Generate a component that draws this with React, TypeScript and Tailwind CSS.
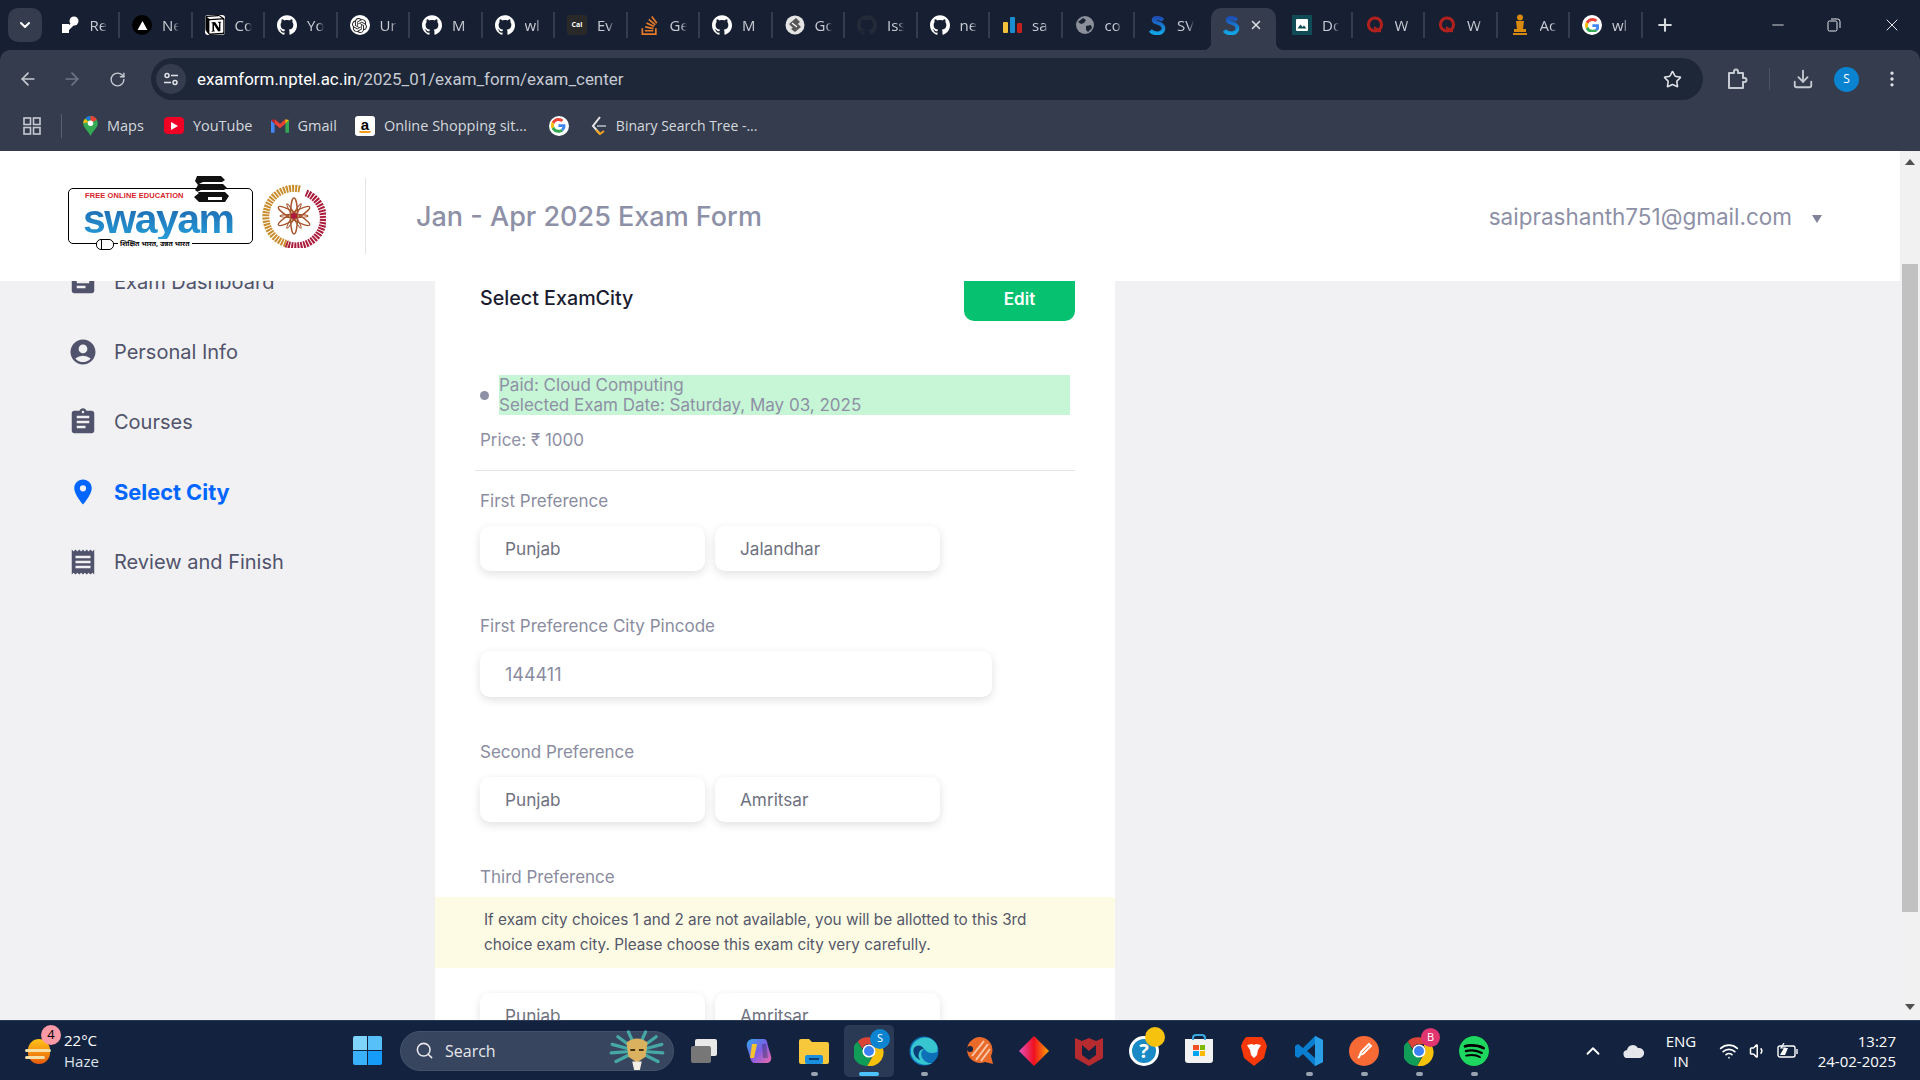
import type { ReactNode } from "react";
import { ArrowLeft, ArrowRight, RotateCw, Star, Download, Plus, X, Minus, ChevronDown, ChevronUp, Search, Wifi, Volume1, EllipsisVertical } from "lucide-react";
import { MdAccountCircle, MdAssignment, MdPlace, MdReceipt } from "react-icons/md";
import { SiGithub, SiNotion, SiOpenai, SiStackoverflow, SiSpotify } from "react-icons/si";

function GoogleIcon({ size = 22 }: { size?: number }) {
  return (
    <span className="flex items-center justify-center rounded-full bg-white" style={{ width: size, height: size }}>
      <svg viewBox="0 0 48 48" width={size * 0.74} height={size * 0.74}>
        <path fill="#EA4335" d="M24 9.5c3.54 0 6.71 1.22 9.21 3.6l6.85-6.85C35.9 2.38 30.47 0 24 0 14.62 0 6.51 5.38 2.56 13.22l7.98 6.19C12.43 13.72 17.74 9.5 24 9.5z" />
        <path fill="#4285F4" d="M46.98 24.55c0-1.57-.15-3.09-.38-4.55H24v9.02h12.94c-.58 2.96-2.26 5.48-4.78 7.18l7.73 6c4.51-4.18 7.09-10.36 7.09-17.65z" />
        <path fill="#FBBC05" d="M10.53 28.59c-.48-1.45-.76-2.99-.76-4.59s.27-3.14.76-4.59l-7.98-6.19C.92 16.46 0 20.12 0 24c0 3.88.92 7.54 2.56 10.78l7.97-6.19z" />
        <path fill="#34A853" d="M24 48c6.48 0 11.93-2.13 15.89-5.81l-7.73-6c-2.15 1.45-4.92 2.3-8.16 2.3-6.26 0-11.57-4.22-13.47-9.91l-7.98 6.19C6.51 42.62 14.62 48 24 48z" />
      </svg>
    </span>
  );
}

function GithubIcon({ dark }: { dark?: boolean }) {
  return (
    <span className={dark ? "text-[#232b38]" : "text-white"}>
      <SiGithub size={20} />
    </span>
  );
}

function SwayamS({ size = 20 }: { size?: number }) {
  return (
    <svg viewBox="0 0 20 24" width={size} height={size}>
      <defs>
        <linearGradient id="sg" x1="0" y1="0" x2="0" y2="1">
          <stop offset="0" stopColor="#1e4fb5" />
          <stop offset="1" stopColor="#11a5e6" />
        </linearGradient>
      </defs>
      <path d="M17 6.5C15.5 4.6 13 3.6 10.4 3.6 7.6 3.6 6 4.8 6 6.3c0 3.8 11.8 2.2 11.8 9.6 0 3.6-3.2 6.1-7.8 6.1-3.4 0-6.3-1.3-8-3.4" fill="none" stroke="url(#sg)" strokeWidth="4.6" />
    </svg>
  );
}

function QuoraIcon() {
  return (
    <svg viewBox="0 0 20 20" width="20" height="20">
      <circle cx="10" cy="9.5" r="6.6" fill="none" stroke="#b3211f" strokeWidth="3" />
      <path d="M9 12.5c2 0 3 3.6 7 3.6" fill="none" stroke="#b3211f" strokeWidth="2.6" />
    </svg>
  );
}

function ChromeIcon({ size = 30 }: { size?: number }) {
  return (
    <svg viewBox="0 0 48 48" width={size} height={size}>
      <path fill="#db4437" d="M24 2a22 22 0 0 1 19 11H24a11 11 0 0 0-10.4 7.4L6 8.6A22 22 0 0 1 24 2z" />
      <path fill="#0f9d58" d="M6 8.6l9.5 16.5A11 11 0 0 0 28 34.3l-6.8 13.5A22 22 0 0 1 6 8.6z" />
      <path fill="#f4c20d" d="M43 13a22 22 0 0 1-21.8 34.8L30.6 31A11 11 0 0 0 32 16.5V13z" />
      <circle cx="24" cy="24" r="10.5" fill="#fff" />
      <circle cx="24" cy="24" r="8" fill="#3b82f6" />
    </svg>
  );
}

const tabs: { icon: ReactNode; label: string; active?: boolean }[] = [
  {
    label: "Re",
    icon: (
      <svg viewBox="0 0 20 20" width="20" height="20" fill="#fff">
        <circle cx="14" cy="6" r="4.5" />
        <path d="M2 9h7v9H2zM9 10l4-3 2 2-6 6z" />
      </svg>
    ),
  },
  {
    label: "Ne",
    icon: (
      <span className="flex h-[20px] w-[20px] items-center justify-center rounded-full bg-black">
        <svg viewBox="0 0 10 10" width="11" height="11"><path d="M5 1l4.5 8h-9z" fill="#fff" /></svg>
      </span>
    ),
  },
  { label: "Co", icon: <span className="flex rounded-[3px] bg-white text-black"><SiNotion size={20} /></span> },
  { label: "Yo", icon: <GithubIcon /> },
  { label: "Ur", icon: <span className="flex h-[20px] w-[20px] items-center justify-center rounded-full bg-white text-[#222]"><SiOpenai size={15} /></span> },
  { label: "M", icon: <GithubIcon /> },
  { label: "wl", icon: <GithubIcon /> },
  {
    label: "Ev",
    icon: <span className="flex h-[20px] w-[20px] items-center justify-center rounded-[3px] bg-[#292929] text-[7px] font-bold text-white">Cal</span>,
  },
  { label: "Ge", icon: <span className="text-[#e87a26]"><SiStackoverflow size={19} /></span> },
  { label: "M", icon: <GithubIcon /> },
  {
    label: "Go",
    icon: (
      <svg viewBox="0 0 20 20" width="20" height="20">
        <circle cx="10" cy="10" r="9.5" fill="#e4e4e4" />
        <path d="M4 9l7-6 4 4-7 6zM6 14l7-5 3 3-6 5z" fill="#555" />
        <path d="M7 8l5 4" stroke="#fff" strokeWidth="1.2" />
      </svg>
    ),
  },
  { label: "Iss", icon: <GithubIcon dark /> },
  { label: "ne", icon: <GithubIcon /> },
  {
    label: "sa",
    icon: (
      <svg viewBox="0 0 20 20" width="20" height="20">
        <rect x="1" y="7" width="5" height="11" rx="1" fill="#f3c23c" />
        <rect x="8" y="2" width="5" height="16" rx="1" fill="#1b8ed1" />
        <rect x="15" y="8" width="5" height="10" rx="1" fill="#c4201c" />
      </svg>
    ),
  },
  {
    label: "co",
    icon: (
      <svg viewBox="0 0 20 20" width="20" height="20">
        <circle cx="10" cy="10" r="9" fill="#8b909b" />
        <path d="M3 7l5-4 3 2-2 3-3 1zM11 11l5-1 1 3-4 4-2-2z" fill="#1a2333" />
      </svg>
    ),
  },
  { label: "SV", icon: <SwayamS /> },
  { label: "", icon: <SwayamS />, active: true },
  {
    label: "Do",
    icon: (
      <span className="flex h-[20px] w-[20px] items-center justify-center bg-[#0f4c55]">
        <svg viewBox="0 0 14 14" width="14" height="14"><rect x="1" y="1" width="12" height="12" rx="1" fill="#fff" /><path d="M2.5 10.5l3-4 2 2.5 1.5-1.5 2.5 3z" fill="#0f4c55" /></svg>
      </span>
    ),
  },
  { label: "W", icon: <QuoraIcon /> },
  { label: "W", icon: <QuoraIcon /> },
  {
    label: "Ac",
    icon: (
      <svg viewBox="0 0 20 22" width="20" height="22" fill="#d98a0b">
        <circle cx="10" cy="3.5" r="3" />
        <path d="M6 7h8l-1 8h-6z" />
        <rect x="4" y="15" width="12" height="3" />
        <rect x="3" y="19" width="14" height="2" />
      </svg>
    ),
  },
  { label: "wl", icon: <GoogleIcon size={20} /> },
];

function ChromeTabs() {
  return (
    <div className="flex h-[50px] items-center bg-[#172032] pl-[8px]">
      <div className="mr-[5.5px] flex h-[34px] w-[34px] items-center justify-center rounded-[10px] bg-[#343c4d] text-white">
        <ChevronDown size={16} strokeWidth={3} />
      </div>
      {tabs.map((tab, i) =>
        tab.active ? (
          <div key={i} className="flex h-[50px] w-[72.5px] items-end pl-[3.5px]">
            <div className="relative flex h-[42px] w-[65px] items-center rounded-t-[10px] bg-[#343c4d] pb-[8px] pl-[10px]">
              <span className="absolute bottom-0 left-[-8px] h-[8px] w-[8px] bg-[radial-gradient(circle_at_0_0,transparent_8px,#343c4d_8.5px)]" />
              <span className="absolute bottom-0 right-[-8px] h-[8px] w-[8px] bg-[radial-gradient(circle_at_100%_0,transparent_8px,#343c4d_8.5px)]" />
              {tab.icon}
              <X size={14} strokeWidth={2.5} className="ml-[8px] text-[#dfe2e8]" />
            </div>
          </div>
        ) : (
          <div key={i} className="flex h-[50px] w-[72.5px] items-center pl-[12px]">
            <span className="flex w-[20px] shrink-0 items-center justify-center">{tab.icon}</span>
            <span className="ml-[10px] w-[17px] overflow-hidden whitespace-nowrap text-[15px] text-[#c9ccd4] [mask-image:linear-gradient(to_right,black_65%,transparent)]">
              {tab.label}
            </span>
            {i !== 15 && <span className="ml-auto h-[26px] w-[2px] bg-[#343c4d]" />}
          </div>
        ),
      )}
      <Plus size={20} strokeWidth={2.5} className="ml-[12px] text-[#d6d9df]" />
      <div className="ml-auto flex items-center text-[#e6e8ec]">
        <Minus size={18} strokeWidth={1.2} className="mr-[40px]" />
        <svg viewBox="0 0 14 14" width="14" height="14" fill="none" stroke="currentColor" strokeWidth="1" className="mr-[41px]">
          <rect x="1" y="3" width="9" height="10" rx="1.5" />
          <path d="M4 1h6.5A2.5 2.5 0 0 1 13 3.5V10" />
        </svg>
        <X size={20} strokeWidth={1.2} className="mr-[18px]" />
      </div>
    </div>
  );
}

function ChromeToolbar() {
  return (
    <div className="flex h-[50px] items-end rounded-t-[10px] bg-[#343c4d] pl-[18px]">
      <div className="flex h-[42px] items-center text-[#c6cad2]">
        <ArrowLeft size={20} />
        <ArrowRight size={20} className="ml-[24px] text-[#6f7583]" />
        <RotateCw size={17} className="ml-[27px]" />
      </div>
      <div className="ml-[25px] flex h-[42px] w-[1552px] items-center rounded-full bg-[#1e2738] pl-[5px]">
        <span className="flex h-[30px] w-[30px] items-center justify-center rounded-full bg-[#343c4d]">
          <svg viewBox="0 0 16 16" width="16" height="16" fill="none" stroke="#e2e4e9" strokeWidth="1.5">
            <circle cx="4" cy="4.5" r="2" />
            <path d="M8 4.5h7M1 11.5h7" />
            <circle cx="12" cy="11.5" r="2" />
          </svg>
        </span>
        <span className="ml-[11px] mt-[1px] font-['Roboto',sans-serif] text-[16.9px] text-white">
          examform.nptel.ac.in<span className="text-[#c6cad2]">/2025_01/exam_form/exam_center</span>
        </span>
        <Star size={19} strokeWidth={2} className="ml-auto mr-[21px] text-[#e2e4e9]" />
      </div>
      <div className="flex h-[42px] items-center text-[#c6cad2]">
        <svg viewBox="0 0 22 22" width="22" height="22" fill="none" stroke="currentColor" strokeWidth="2" strokeLinejoin="round" className="ml-[23px]">
          <path d="M3 5h5V3.5a2 2 0 0 1 4 0V5h5v5h1.5a2 2 0 0 1 0 4H17v6H3z" />
        </svg>
        <span className="ml-[21px] h-[22px] w-[1px] bg-[#4c5463]" />
        <Download size={22} className="ml-[22px]" />
        <span className="ml-[20px] flex h-[25px] w-[25px] items-center justify-center rounded-full bg-[#0a84d0] text-[12px] text-white">S</span>
        <EllipsisVertical size={20} className="ml-[23px] text-[#dfe2e8]" />
      </div>
    </div>
  );
}

function Bookmark({ icon, label, className }: { icon: ReactNode; label?: string; className: string }) {
  return (
    <span className={`flex items-center ${className}`}>
      {icon}
      {label && <span className="ml-[9px] whitespace-nowrap">{label}</span>}
    </span>
  );
}

function BookmarksBar() {
  return (
    <div className="flex h-[51px] items-center bg-[#343c4d] pl-[23px] text-[14.5px] text-[#d5d8de]">
      <svg viewBox="0 0 18 18" width="18" height="18" fill="none" stroke="#c6cad2" strokeWidth="1.6">
        <rect x="1" y="1" width="6.5" height="6.5" />
        <rect x="10.5" y="1" width="6.5" height="6.5" />
        <rect x="1" y="10.5" width="6.5" height="6.5" />
        <rect x="10.5" y="10.5" width="6.5" height="6.5" />
      </svg>
      <span className="ml-[20px] h-[24px] w-[1px] bg-[#59606e]" />
      <Bookmark
        className="ml-[21px]"
        label="Maps"
        icon={
          <svg viewBox="0 0 16 22" width="15" height="20">
            <path d="M8 0a8 8 0 0 1 8 8c0 5-5 8-8 14C5 16 0 13 0 8a8 8 0 0 1 8-8z" fill="#34a853" />
            <path d="M2 3a8 8 0 0 1 6-3v5z" fill="#1a73e8" />
            <path d="M8 0a8 8 0 0 1 7 4L8 8z" fill="#ea4335" />
            <path d="M0 8a8 8 0 0 1 2-5l4 4z" fill="#fbbc05" />
            <circle cx="8" cy="8" r="3" fill="#fff" />
          </svg>
        }
      />
      <Bookmark
        className="ml-[20px]"
        label="YouTube"
        icon={
          <span className="flex h-[17px] w-[20px] items-center justify-center rounded-[4px] bg-[#f00024]">
            <svg viewBox="0 0 8 8" width="8" height="8"><path d="M1 0l7 4-7 4z" fill="#fff" /></svg>
          </span>
        }
      />
      <Bookmark
        className="ml-[18px]"
        label="Gmail"
        icon={
          <svg viewBox="0 0 20 16" width="18" height="15">
            <path d="M0 2v14h4V6z" fill="#4285f4" />
            <path d="M20 2v14h-4V6z" fill="#34a853" />
            <path d="M4 6V1l6 5 6-5v5l-6 5z" fill="#ea4335" />
            <path d="M0 2l4-1v5z" fill="#c5221f" />
            <path d="M20 2l-4-1v5z" fill="#fbbc05" />
          </svg>
        }
      />
      <Bookmark
        className="ml-[18px]"
        label="Online Shopping sit..."
        icon={
          <span className="flex h-[20px] w-[20px] flex-col items-center justify-center rounded-[3px] bg-white font-['Liberation_Sans',sans-serif] text-[15px] font-bold leading-[14px] text-black">
            a
            <span className="mt-[-1px] h-[2px] w-[12px] rounded-b-full bg-[#f79c1c]" />
          </span>
        }
      />
      <span className="ml-[22px] flex"><GoogleIcon size={20} /></span>
      <Bookmark
        className="ml-[22px] text-[14px]"
        label="Binary Search Tree -..."
        icon={
          <svg viewBox="0 0 16 20" width="16" height="20" fill="none" strokeWidth="2">
            <path d="M9 1L2 10l7 8" stroke="#e8e8e8" />
            <path d="M5 14l4 4 4-3" stroke="#f7a11a" />
            <path d="M6 10h9" stroke="#9aa0ab" />
          </svg>
        }
      />
    </div>
  );
}

function Logo() {
  return (
    <div className="flex items-center">
      <div className="relative h-[56px] w-[185px] rounded-[5px] border-[1.5px] border-black bg-white">
        <span className="absolute left-[16px] top-[3px] whitespace-nowrap font-['Liberation_Sans',sans-serif] text-[7.5px] font-bold leading-[8px] tracking-[0.1px] text-[#d8232a]">
          FREE ONLINE EDUCATION
        </span>
        <span className="absolute left-[14px] top-[12px] bg-gradient-to-b from-[#1d62ab] to-[#28a7e0] bg-clip-text pb-[8px] font-['Liberation_Sans',sans-serif] text-[41px] font-bold leading-[36px] tracking-[-1.5px] text-transparent">
          swayam
        </span>
        <svg viewBox="0 0 36 30" width="38" height="30" className="absolute right-[22px] top-[-15px]">
          <path d="M4 2h24l4 4-3 2H10L6 10h24l4 4-3 2H8l-4 2h28l4 4-4 6H6L1 23l5-4-4-3 3-5-3-4z" fill="#111" />
          <rect x="15" y="23" width="14" height="3" fill="#fff" />
        </svg>
        <span className="absolute bottom-[-7px] left-[27px] flex h-[11px] w-[18px] items-center justify-center rounded-[5px] border border-black bg-white">
          <span className="mr-[8px] h-full w-[1px] bg-black" />
        </span>
        <span className="absolute bottom-[-6px] left-[49px] bg-white px-[2px] font-['Noto_Sans',sans-serif] text-[7px] font-bold leading-[10px] text-black">
          शिक्षित भारत, उन्नत भारत
        </span>
      </div>
      <svg viewBox="0 0 64 64" width="64" height="64" className="ml-[9px] mt-[-1px]">
        <path d="M38 5A28 28 0 0 0 26 60" fill="none" stroke="#c98d2d" strokeWidth="7" strokeDasharray="2 1" />
        <path d="M44 9A27 27 0 0 1 24 60" fill="none" stroke="#ab1c3c" strokeWidth="7" strokeDasharray="2 1" />
        <g fill="none" stroke="#a9562f" strokeWidth="1.3">
          <ellipse cx="32" cy="32" rx="3.5" ry="18" />
          <ellipse cx="32" cy="32" rx="3.5" ry="18" transform="rotate(60 32 32)" />
          <ellipse cx="32" cy="32" rx="3.5" ry="18" transform="rotate(120 32 32)" />
          <ellipse cx="32" cy="32" rx="1.5" ry="14" transform="rotate(30 32 32)" />
          <ellipse cx="32" cy="32" rx="1.5" ry="14" transform="rotate(90 32 32)" />
          <ellipse cx="32" cy="32" rx="1.5" ry="14" transform="rotate(150 32 32)" />
        </g>
        <circle cx="32" cy="32" r="3" fill="#ab1c3c" />
      </svg>
    </div>
  );
}

function PageHeader() {
  return (
    <div className="flex h-[130px] shrink-0 items-center bg-white pl-[68px] pr-[78px]">
      <Logo />
      <span className="ml-[39px] h-[76px] w-[1px] bg-[#e3e4e9]" />
      <h1 className="ml-[50px] mt-[3px] text-[27px] font-medium text-[#8d90a6]">Jan - Apr 2025 Exam Form</h1>
      <span className="ml-auto mt-[1px] text-[22.5px] text-[#8d90a6]">saiprashanth751@gmail.com</span>
      <span className="ml-[20px] mt-[6px] h-0 w-0 border-x-[5px] border-t-[8px] border-x-transparent border-t-[#7f8298]" />
    </div>
  );
}

const navItems = [
  { label: "Exam Dashboard", icon: <MdAssignment size={30} /> },
  { label: "Personal Info", icon: <MdAccountCircle size={30} /> },
  { label: "Courses", icon: <MdAssignment size={30} /> },
  { label: "Select City", icon: <MdPlace size={30} />, active: true },
  { label: "Review and Finish", icon: <MdReceipt size={30} /> },
];

function Sidebar() {
  return (
    <nav className="mt-[-34px] w-[435px] shrink-0 pl-[68px]">
      {navItems.map((item) => (
        <div
          key={item.label}
          className={`flex h-[70px] items-center gap-[16px] ${item.active ? "text-[21.8px] font-bold text-[#0066ff]" : "text-[20px] text-[#50536b]"}`}
        >
          {item.icon}
          {item.label}
        </div>
      ))}
    </nav>
  );
}

function Box({ value, wide }: { value: string; wide?: boolean }) {
  return (
    <div className={`flex items-center rounded-[10px] bg-white pl-[25px] shadow-[0_3px_10px_rgba(0,0,0,0.12)] ${wide ? "h-[46px] w-[512px] text-[18px] text-[#8a8ca0]" : "h-[45px] w-[225px] text-[17.2px] text-[#6f7280]"}`}>
      {value}
    </div>
  );
}

function Label({ children, className = "" }: { children: ReactNode; className?: string }) {
  return <div className={`h-[24px] text-[17px] leading-[24px] text-[#8a8ca0] ${className}`}>{children}</div>;
}

function CityCard() {
  return (
    <main className="mt-[-10px] w-[680px] shrink-0 bg-white">
      <div className="px-[45px] pr-[40px]">
        <div className="flex h-[50px] items-center justify-between">
          <h2 className="mt-[6px] text-[19.7px] font-medium text-[#1b1c30]">Select ExamCity</h2>
          <button className="h-[50px] w-[111px] rounded-[10px] bg-[#06c270] pt-[8px] text-[17px] font-semibold text-white">Edit</button>
        </div>
        <div className="mt-[54px] flex items-center">
          <span className="h-[9px] w-[9px] rounded-full bg-[#8e90a5]" />
          <div className="ml-[10px] h-[40px] w-[571px] bg-[#c6f6d5] text-[17px] leading-[20px] text-[#8e90a5]">
            Paid: Cloud Computing
            <br />
            Selected Exam Date: Saturday, May 03, 2025
          </div>
        </div>
        <div className="mt-[13px] h-[24px] text-[17px] leading-[24px] text-[#8e90a5]">Price: ₹ 1000</div>
        <div className="ml-[-5px] mt-[18px] h-[1px] bg-[#e3e4e9]" />
        <Label className="mt-[18px]">First Preference</Label>
        <div className="mt-[13px] flex gap-[10px]">
          <Box value="Punjab" />
          <Box value="Jalandhar" />
        </div>
        <Label className="mt-[43px]">First Preference City Pincode</Label>
        <div className="mt-[13px]">
          <Box value="144411" wide />
        </div>
        <Label className="mt-[43px]">Second Preference</Label>
        <div className="mt-[13px] flex gap-[10px]">
          <Box value="Punjab" />
          <Box value="Amritsar" />
        </div>
        <Label className="mt-[43px]">Third Preference</Label>
      </div>
      <div className="mt-[8px] h-[71px] bg-[#fdfbe3] pl-[49px] pr-[60px] pt-[10px] text-[15.3px] leading-[25px] text-[#55576a]">
        If exam city choices 1 and 2 are not available, you will be allotted to this 3rd choice exam city. Please choose this exam city very carefully.
      </div>
      <div className="ml-[45px] mt-[25px] flex gap-[10px]">
        <Box value="Punjab" />
        <Box value="Amritsar" />
      </div>
    </main>
  );
}

function ScrollBar() {
  return (
    <div className="flex w-[20px] shrink-0 flex-col items-center bg-[#f1f1f1]">
      <span className="mt-[8px] h-0 w-0 border-x-[5px] border-b-[6px] border-x-transparent border-b-[#505050]" />
      <span className="mt-[99px] h-[648px] w-[16px] bg-[#c1c1c1]" />
      <span className="mt-[92px] h-0 w-0 border-x-[5px] border-t-[6px] border-x-transparent border-t-[#505050]" />
    </div>
  );
}

function TaskIcon({ children, dot, active }: { children: ReactNode; dot?: boolean; active?: boolean }) {
  return (
    <div className={`relative flex h-[52px] w-[50px] items-center justify-center rounded-[5px] ${active ? "bg-[#2a3a54]" : ""}`}>
      {children}
      {dot && <span className="absolute bottom-[1px] h-[4px] w-[7px] rounded-full bg-[#9aa3b2]" />}
      {active && <span className="absolute bottom-[1px] h-[4px] w-[20px] rounded-full bg-[#4cc2ff]" />}
    </div>
  );
}

function Taskbar() {
  return (
    <div className="flex h-[60px] items-center border-t border-[#2b3a55] bg-[#13233f] font-['Open_Sans',sans-serif] text-white">
      <div className="relative ml-[25px] h-[26px] w-[28px]">
        <span className="absolute left-[3px] top-[1px] h-[25px] w-[22px] rounded-full bg-gradient-to-b from-[#fcc419] to-[#e8590c]" />
        <span className="absolute left-0 top-[11px] h-[3px] w-[26px] rounded bg-[#f6e0a8]" />
        <span className="absolute left-[0px] top-[18px] h-[3px] w-[20px] rounded bg-[#f6e0a8]" />
        <span className="absolute left-[16px] top-[-13px] flex h-[20px] w-[20px] items-center justify-center rounded-full bg-[#fa9aa6] text-[13px] text-black">4</span>
      </div>
      <div className="ml-[11px] w-[61px] text-[15px] leading-[21px]">
        22°C
        <br />
        <span className="text-[#dfe3ea]">Haze</span>
      </div>
      <div className="ml-[228px] grid h-[29px] w-[29px] grid-cols-2 gap-[1px]">
        <span className="rounded-tl-[2px] bg-[#7fd4fb]" />
        <span className="rounded-tr-[2px] bg-[#58c0f9]" />
        <span className="rounded-bl-[2px] bg-[#3ab2fb]" />
        <span className="rounded-br-[2px] bg-[#159cf9]" />
      </div>
      <div className="ml-[18px] flex h-[40px] w-[274px] items-center rounded-full border border-[#44526b] bg-[#38455f] pl-[14px]">
        <Search size={19} className="text-[#e6e8ec]" />
        <span className="ml-[11px] text-[16px] text-[#e6e8ec]">Search</span>
        <svg viewBox="0 0 60 44" width="58" height="42" className="ml-auto mr-[7px]">
          <g stroke="#46a8a4" strokeWidth="3.4" fill="none" strokeLinecap="round">
            <path d="M30 22L3 24M30 22L4 15M30 22L10 7M30 22L21 2M30 22L39 2M30 22L50 7M30 22L56 15M30 22L57 24M30 22L8 33M30 22L52 33" />
          </g>
          <path d="M19 13q11-8 22 0l-2 15-9 6-9-6z" fill="#d9b15f" />
          <path d="M23 20h5v2h-5zM32 20h5v2h-5z" fill="#4a3410" />
          <path d="M25 33h10l-2 9h-6z" fill="#f3eee3" />
        </svg>
      </div>
      <div className="ml-[5px] flex w-[908px] items-center gap-[5px]">
        <TaskIcon>
          <span className="relative block h-[24px] w-[26px]">
            <span className="absolute right-0 top-0 h-[17px] w-[22px] rounded-[2px] bg-[#e8e8e8]" />
            <span className="absolute bottom-0 left-0 h-[17px] w-[20px] rounded-[2px] bg-[#777]" />
          </span>
        </TaskIcon>
        <TaskIcon>
          <svg viewBox="0 0 30 30" width="30" height="30">
            <defs>
              <linearGradient id="cp" x1="0" y1="0" x2="1" y2="1">
                <stop offset="0" stopColor="#2ea8e8" />
                <stop offset="0.5" stopColor="#7d5ce6" />
                <stop offset="1" stopColor="#ef6aa8" />
              </linearGradient>
            </defs>
            <path d="M9 3h11c3 0 3 3 4 7l3 10c1 4-1 7-5 7H11c-3 0-4-2-5-6L3 11C2 6 5 3 9 3z" fill="url(#cp)" />
            <path d="M8 8l5 0-3 14H6z" fill="#f4c430" />
            <path d="M18 8h4l2 14h-5z" fill="#1b2a4a" opacity="0.35" />
          </svg>
        </TaskIcon>
        <TaskIcon dot>
          <svg viewBox="0 0 30 26" width="30" height="26">
            <path d="M0 3a2 2 0 0 1 2-2h8l3 3h15a2 2 0 0 1 2 2v18a2 2 0 0 1-2 2H2a2 2 0 0 1-2-2z" fill="#f7c73c" />
            <rect x="6" y="17" width="18" height="9" rx="2" fill="#1a8fe0" />
            <rect x="10" y="20" width="10" height="2" fill="#0c3f73" />
          </svg>
        </TaskIcon>
        <TaskIcon active>
          <ChromeIcon size={30} />
          <span className="absolute right-[4px] top-[4px] flex h-[20px] w-[20px] items-center justify-center rounded-full bg-[#0a84d0] text-[11px]">S</span>
        </TaskIcon>
        <TaskIcon dot>
          <svg viewBox="0 0 30 30" width="30" height="30">
            <circle cx="15" cy="15" r="14.5" fill="#0c6fb8" />
            <path d="M2 13C4 4 13 0 20 2c6 2 10 8 8 14-4 2-11 1-12-3-4 1-5 6-2 10 2 3 6 5 10 4-8 4-19 1-22-9z" fill="#37c6d0" />
            <path d="M15 13c-5 0-7 6-4 11-5-2-8-8-6-12 3-4 8-3 10 1z" fill="#0a3f78" />
          </svg>
        </TaskIcon>
        <TaskIcon>
          <svg viewBox="0 0 30 30" width="30" height="30">
            <path d="M15 1a13 13 0 0 1 12 19l2 8-8-2A13 13 0 1 1 15 1z" fill="#ea6a2a" />
            <path d="M12 24L24 8M17 25L26 13M8 20L20 5" stroke="#f8c8a8" strokeWidth="2" />
            <circle cx="6" cy="13" r="3" fill="#13233f" />
          </svg>
        </TaskIcon>
        <TaskIcon>
          <svg viewBox="0 0 30 30" width="30" height="30">
            <defs>
              <linearGradient id="dm" x1="0" y1="0" x2="1" y2="0">
                <stop offset="0" stopColor="#e84fc0" />
                <stop offset="0.5" stopColor="#ef1020" />
                <stop offset="1" stopColor="#ffa500" />
              </linearGradient>
            </defs>
            <path d="M15 0l15 15-15 15L0 15z" fill="url(#dm)" />
          </svg>
        </TaskIcon>
        <TaskIcon>
          <svg viewBox="0 0 28 30" width="28" height="30">
            <path d="M0 2l7 3 7-3 7 3 7-3v20l-14 8-14-8z" fill="#b52b30" />
            <path d="M7 9l7 6 7-6v10l-7 5-7-5z" fill="#13233f" />
          </svg>
        </TaskIcon>
        <TaskIcon>
          <span className="flex h-[30px] w-[30px] items-center justify-center rounded-full border-[3px] border-white bg-[#1a8ac6] text-[20px] font-bold text-white">?</span>
          <span className="absolute right-[4px] top-[2px] h-[20px] w-[20px] rounded-full bg-[#f6c20e]" />
        </TaskIcon>
        <TaskIcon>
          <span className="relative grid h-[24px] w-[28px] grid-cols-2 content-center justify-center gap-[1px] rounded-b-[3px] bg-[#f2f2f2] px-[8px] py-[6px]">
            <span className="absolute left-[7px] top-[-5px] h-[6px] w-[14px] rounded-t-[4px] border-2 border-b-0 border-[#3ba7e0]" />
            <span className="h-[5px] bg-[#f25022]" />
            <span className="h-[5px] bg-[#7fba00]" />
            <span className="h-[5px] bg-[#00a4ef]" />
            <span className="h-[5px] bg-[#ffb900]" />
          </span>
        </TaskIcon>
        <TaskIcon>
          <svg viewBox="0 0 26 30" width="26" height="30">
            <path d="M5 1h16l3 4 2 5-3 12-10 8-10-8L0 10l2-5z" fill="#f7380a" />
            <path d="M6 9l5-1 2 1 2-1 5 1-3 5-1 5-3 3-3-3-1-5z" fill="#fff" />
          </svg>
        </TaskIcon>
        <TaskIcon dot>
          <svg viewBox="0 0 28 30" width="28" height="30">
            <path d="M20 0l8 4v22l-8 4-12-12-5 4-3-2v-10l3-2 5 4z" fill="#0a7fd1" />
            <path d="M20 8l-8 7 8 7z" fill="#13233f" />
            <path d="M20 0l8 4v22l-8 4z" fill="#2a9fe8" />
          </svg>
        </TaskIcon>
        <TaskIcon dot>
          <span className="flex h-[30px] w-[30px] items-center justify-center rounded-full bg-[#f76935]">
            <svg viewBox="0 0 20 20" width="20" height="20"><path d="M15 3l2 2-8 8-3 1 1-3zM6 15l-2 2" stroke="#fff" strokeWidth="2" fill="none" /></svg>
          </span>
        </TaskIcon>
        <TaskIcon dot>
          <ChromeIcon size={30} />
          <span className="absolute right-[4px] top-[3px] flex h-[19px] w-[19px] items-center justify-center rounded-full bg-[#e0356f] text-[11px]">B</span>
        </TaskIcon>
        <TaskIcon dot>
          <span className="rounded-full bg-black text-[#1ed760]"><SiSpotify size={30} /></span>
        </TaskIcon>
      </div>
      <ChevronUp size={22} className="ml-[-5px] text-white" />
      <svg viewBox="0 0 22 14" width="22" height="14" className="ml-[19px]">
        <path d="M5 14a4 4 0 0 1-1-8 6 6 0 0 1 11-2 5 5 0 0 1 2 10z" fill="#e4e6ea" />
      </svg>
      <div className="ml-[19px] w-[34px] text-center text-[15px] leading-[20px]">
        ENG
        <br />
        IN
      </div>
      <Wifi size={20} className="ml-[21px]" />
      <Volume1 size={18} className="ml-[10px]" />
      <svg viewBox="0 0 22 16" width="22" height="16" className="ml-[10px]" fill="none" stroke="#fff" strokeWidth="1.4">
        <rect x="1" y="3" width="17" height="11" rx="2" />
        <path d="M3 12l4-7h4l-3 7z" fill="#fff" stroke="none" />
        <path d="M7 0L4 5h4l-2 4" strokeWidth="1.2" />
        <path d="M20 6v5" />
      </svg>
      <div className="ml-auto mr-[24px] text-right text-[15px] leading-[20px]">
        13:27
        <br />
        24-02-2025
      </div>
    </div>
  );
}

export default function App() {
  return (
    <div className="flex h-[1080px] w-[1920px] flex-col overflow-hidden bg-[#172032] font-['Inter',sans-serif]">
      <div className="font-['Open_Sans',sans-serif]">
        <ChromeTabs />
        <ChromeToolbar />
        <BookmarksBar />
      </div>
      <div className="flex h-[869px]">
        <div className="flex min-w-0 flex-1 flex-col">
          <PageHeader />
          <div className="flex min-h-0 flex-1 overflow-hidden bg-[#f1f1f3]">
            <Sidebar />
            <CityCard />
          </div>
        </div>
        <ScrollBar />
      </div>
      <Taskbar />
    </div>
  );
}
